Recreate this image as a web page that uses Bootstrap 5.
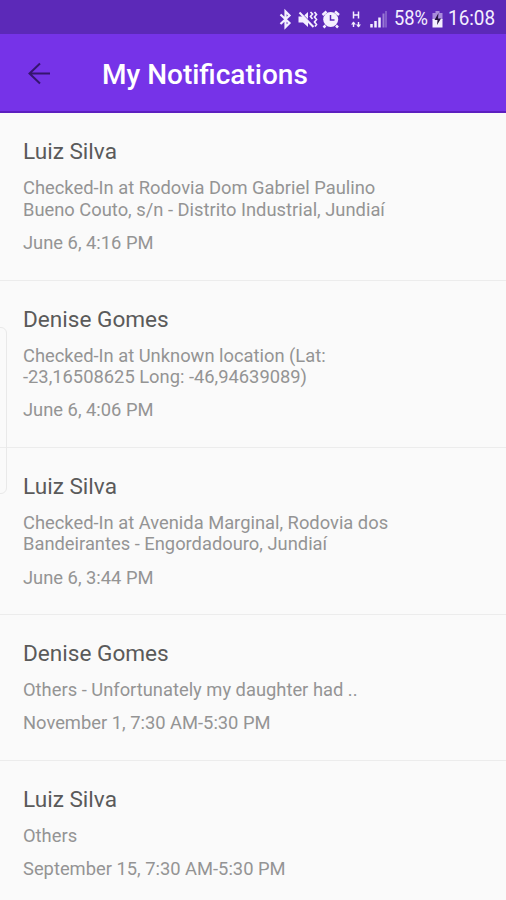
<!DOCTYPE html>
<html lang="en">
<head>
<meta charset="utf-8">
<meta name="viewport" content="width=device-width, initial-scale=1">
<title>My Notifications</title>
<link href="https://cdn.jsdelivr.net/npm/bootstrap@5.3.0/dist/css/bootstrap.min.css" rel="stylesheet">
<style>
body{font-family:Roboto,"Liberation Sans",sans-serif;background:#fafafa;height:900px;overflow:hidden}
.status-strip{height:34px;background:#5c29b8;color:#f4efff;padding:3px 11px 0 0}
.status-strip svg{display:block;flex:none}
.status-icons{margin-right:2px}
.status-text{font-size:20.8px;line-height:31px;white-space:nowrap;transform:scaleX(.91);transform-origin:0 50%}
.percent-text{width:34px;transform:scaleX(.88)}
.clock-text{width:47px}
.app-header{height:79px;background:#7633e8;border-bottom:2px solid #5c1fc0;padding-left:24px;padding-top:3px}
.back-button{width:30px;height:30px;color:#35156f}
.app-title{font-size:28px;line-height:32px;font-weight:500;color:#fff;margin-left:48px;padding-top:2px;white-space:nowrap}
main{padding-top:.8px}
.notice{padding:24.65px 23px 26.3px;border-bottom:1px solid #ececec}
.notice-name{font-size:22.6px;line-height:28px;color:#5a5a5a}
.notice-text,.notice-date{font-size:18.33px;line-height:21.5px;color:#949494;white-space:nowrap}
.notice-text{margin-top:11.05px}
.notice-date{margin-top:11.7px}
.edge-handle{left:-8px;top:327px;width:15px;height:167px;border:1px solid #e9e9e9;border-radius:6px}
</style>
</head>
<body class="position-relative">
<div class="status-strip d-flex align-items-center justify-content-end">
  <svg class="status-icons" width="116" height="30" viewBox="276 3 116 30" fill="none" stroke="currentColor" aria-hidden="true">
    <path d="M280.500 13.500l9 8.500-4 4V10.500l4 4-9 8.500" stroke-width="2.200"/>
    <path d="M298.500 15.500h4.500l5-4.500v15l-5-4.500h-4.500z" fill="currentColor" stroke="none"/>
    <path d="M299 10l15 15" stroke="#5c29b8" stroke-width="1.500"/>
    <path d="M299.500 11.500l14 14.500" stroke-width="2"/>
    <path d="M310.500 11l2 2-2 2.500 2 2.500M314.500 11l2 2.500-2 2.500 2 2.500-2 2.500 2 2.500-1.500 2" stroke-width="1.700"/>
    <path d="M322.500 14l4-3.500M335 10.500l4 3.500M325.500 24.500l-2 2M336 24.500l2 2" stroke-width="2.500"/>
    <circle cx="330.700" cy="18.500" r="7.500" fill="currentColor" stroke="none"/>
    <path d="M330.500 14v5h4" stroke="#5c29b8" stroke-width="1.500"/>
    <path d="M353.500 10.500v7M358.500 10.500v7M353.500 14h5" stroke-width="1.500"/>
    <path d="M353.500 21v5M358.500 21v5" stroke-width="1.400"/>
    <path d="M351 23.500l2.500-3 2.500 3zM356 23.500l2.500 3 2.500-3z" fill="currentColor" stroke="none"/>
    <path d="M371.500 23v3.500M375.500 20v6.500M379.500 16.500v10" stroke-width="2.500"/>
    <path d="M383.500 12.500v14" stroke-width="2" opacity=".42"/><path d="M386 10v16.500" stroke-width="1.500" opacity=".35"/>
  </svg>
  <span class="status-text percent-text me-1 flex-shrink-0 d-block">58%</span>
  <svg class="me-1" width="12" height="30" viewBox="431 3 12 30" aria-hidden="true">
    <path d="M434.500 10h4v2h3v7h-10v-7h3z" fill="#a98bdc"/><path d="M431.500 18h10v8.500h-10z" fill="#f4efff"/>
    <path d="M437.500 12l-4 7h3l-.5 5 4-6.500h-3z" fill="#25143e"/>
  </svg>
  <span class="status-text clock-text flex-shrink-0 d-block">16:08</span>
</div>
<header class="app-header d-flex align-items-center">
  <a class="back-button d-block" href="#" aria-label="Back">
    <svg class="d-block" width="30" height="30" viewBox="0 0 30 30" fill="none" stroke="currentColor" stroke-width="2"><path d="M26 14.500H6M16 4.500l-10.500 10L16 24.500"/></svg>
  </a>
  <h1 class="app-title mb-0">My Notifications</h1>
</header>
<main>
  <article class="notice"><h2 class="notice-name fw-normal mb-0">Luiz Silva</h2>
    <p class="notice-text mb-0">Checked-In at Rodovia Dom Gabriel Paulino<br>Bueno Couto, s/n - Distrito Industrial, Jundiaí</p>
    <p class="notice-date mb-0">June 6, 4:16 PM</p></article>
  <article class="notice"><h2 class="notice-name fw-normal mb-0">Denise Gomes</h2>
    <p class="notice-text mb-0">Checked-In at Unknown location (Lat:<br>-23,16508625 Long: -46,94639089)</p>
    <p class="notice-date mb-0">June 6, 4:06 PM</p></article>
  <article class="notice"><h2 class="notice-name fw-normal mb-0">Luiz Silva</h2>
    <p class="notice-text mb-0">Checked-In at Avenida Marginal, Rodovia dos<br>Bandeirantes - Engordadouro, Jundiaí</p>
    <p class="notice-date mb-0">June 6, 3:44 PM</p></article>
  <article class="notice"><h2 class="notice-name fw-normal mb-0">Denise Gomes</h2>
    <p class="notice-text mb-0">Others - Unfortunately my daughter had ..</p>
    <p class="notice-date mb-0">November 1, 7:30 AM-5:30 PM</p></article>
  <article class="notice"><h2 class="notice-name fw-normal mb-0">Luiz Silva</h2>
    <p class="notice-text mb-0">Others</p>
    <p class="notice-date mb-0">September 15, 7:30 AM-5:30 PM</p></article>
</main>
<div class="edge-handle position-absolute"></div>
</body>
</html>
